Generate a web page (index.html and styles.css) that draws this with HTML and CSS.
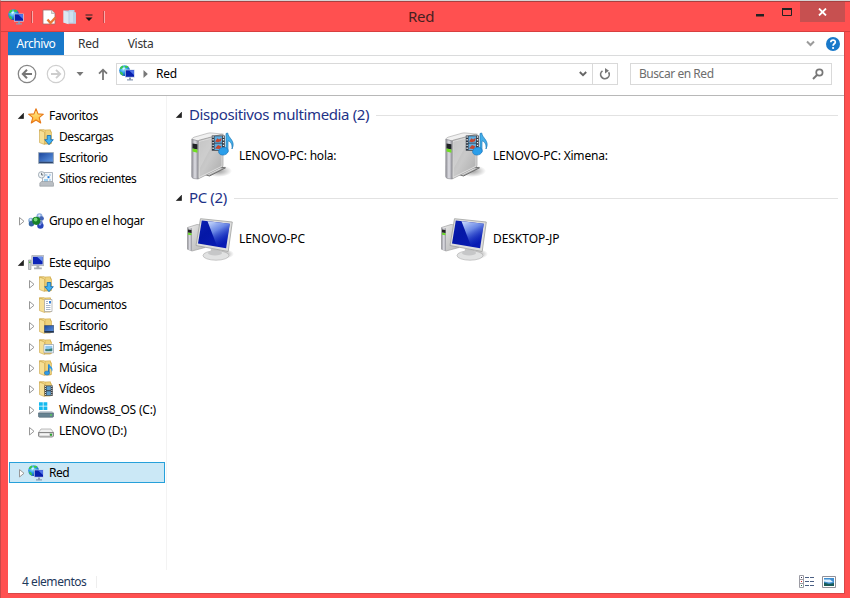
FILE: index.html
```html
<!DOCTYPE html>
<html lang="es">
<head>
<meta charset="utf-8">
<title>Red</title>
<link rel="stylesheet" href="styles.css">
</head>
<body>
<svg class="defs" width="0" height="0" aria-hidden="true">
  <defs>
    <linearGradient id="g-screen" x1="0" y1="0" x2="1" y2="1"><stop offset="0" stop-color="#0d22b4"/><stop offset=".35" stop-color="#0417a6"/><stop offset="1" stop-color="#0a1cb8"/></linearGradient>
    <linearGradient id="g-shine" x1="0" y1="0" x2=".5" y2="1"><stop offset="0" stop-color="#d5e4ff"/><stop offset=".45" stop-color="#7d9cf0" stop-opacity=".85"/><stop offset="1" stop-color="#1433cc" stop-opacity=".1"/></linearGradient>
    <linearGradient id="g-metal" x1="0" y1="0" x2="1" y2="1"><stop offset="0" stop-color="#ececec"/><stop offset=".5" stop-color="#cdcdcd"/><stop offset="1" stop-color="#b9b9b9"/></linearGradient>
    <linearGradient id="g-front" x1="0" y1="0" x2="1" y2="1"><stop offset="0" stop-color="#b4b4b4"/><stop offset=".5" stop-color="#c9c9c9"/><stop offset="1" stop-color="#a9a9a9"/></linearGradient>
    <linearGradient id="g-side" x1="0" y1="0" x2="1" y2="0"><stop offset="0" stop-color="#8d8d94"/><stop offset=".5" stop-color="#dedee4"/><stop offset="1" stop-color="#95959c"/></linearGradient>
    <linearGradient id="g-fold" x1="0" y1="0" x2="1" y2="0"><stop offset="0" stop-color="#e0b84f"/><stop offset=".45" stop-color="#fbe9a6"/><stop offset="1" stop-color="#e9cb70"/></linearGradient>
    <linearGradient id="g-star" x1="0" y1="0" x2="0" y2="1"><stop offset="0" stop-color="#fff59a"/><stop offset="1" stop-color="#ffb02b"/></linearGradient>
    <linearGradient id="g-desk" x1="0" y1="0" x2="1" y2="1"><stop offset="0" stop-color="#1b469c"/><stop offset="1" stop-color="#5d95e2"/></linearGradient>
    <radialGradient id="g-globe" cx=".4" cy=".35" r=".7"><stop offset="0" stop-color="#a8edff"/><stop offset=".5" stop-color="#2a9ae8"/><stop offset="1" stop-color="#0b4aa5"/></radialGradient>
    <radialGradient id="g-shadow"><stop offset="0" stop-color="#000" stop-opacity=".4"/><stop offset="1" stop-color="#000" stop-opacity="0"/></radialGradient>

    <symbol id="net" viewBox="0 0 16 16">
      <circle cx="5.600" cy="5.600" r="5.400" fill="url(#g-globe)"/>
      <path d="M.8 3.500C1.500 2 2.600 1 4 .6l.5 1.200-1.200 1.400L2 4.300zM5.500 1l2.500-.2 1.500 1L8 3 6.300 2.800zM1 6.500l2 .8 1.200 2-.7 1.200C2 9.800 1 8.500 1 6.500z" fill="#3bc94a"/>
      <path d="M3.500 3.200l1.800-.8.8 1.200-1.600 1.200z" fill="#dcfaff"/>
      <path d="M6 4.600h9.700v8H6z" fill="#c5d3e8"/>
      <path d="M6.700 5.300h8.300v6.500H6.700z" fill="#0820ad"/>
      <path d="M10 5.300h5l-.1 4.800z" fill="#4f73e8"/>
      <path d="M10 12.600h2v1.700h2v1.200H8v-1.200h2z" fill="#8b9bb5"/>
    </symbol>
    <symbol id="star" viewBox="0 0 16 16">
      <path d="M8 .8l2 5.100 5.400.3-4.200 3.500 1.500 5.300L8 12l-4.700 3 1.500-5.300L.6 6.200 6 5.900z" fill="url(#g-star)" stroke="#e77817" stroke-width="1.100" stroke-linejoin="round"/>
    </symbol>
    <symbol id="folder" viewBox="0 0 16 16">
      <path d="M1.500.8h5l1 1h5v13.200h-6l-1-1z" fill="url(#g-fold)" stroke="#c69e3c" stroke-width=".7"/>
      <path d="M7 1l5.500-.2v2h1v11.700H7z" fill="#efd27c" stroke="#d0aa4c" stroke-width=".6"/>
      <path d="M1.500 1l5 2v12.500l-5-1.900z" fill="#f6df95" stroke="#c9a244" stroke-width=".6"/>
    </symbol>
    <symbol id="downloads" viewBox="0 0 16 16">
      <use href="#folder"/>
      <path d="M9.200 6.500h3.600v4.200h2.500L11 15.700l-4.300-5h2.500z" fill="#42b1f2" stroke="#0e67ae" stroke-width=".8"/>
    </symbol>
    <symbol id="documents" viewBox="0 0 16 16">
      <use href="#folder"/>
      <path d="M6.500 2.500H14v12H6.500z" fill="#fff" stroke="#a5a5a5" stroke-width=".7"/>
      <path d="M8 4.500h2M8 6.500h2M8 8.500h4.500M8 10.500h4.500M8 12.500h4.500" stroke="#90a4bb" stroke-width=".8"/>
      <path d="M11 4h2v2.500h-2z" fill="#3c83d6"/>
    </symbol>
    <symbol id="deskfolder" viewBox="0 0 16 16">
      <use href="#folder"/>
      <path d="M6.500 7.500h9.300v6.800H6.500z" fill="url(#g-desk)" stroke="#49566b" stroke-width=".7"/>
      <path d="M6.500 13h9.300v1.500H6.500z" fill="#24344e"/>
    </symbol>
    <symbol id="pictures" viewBox="0 0 16 16">
      <use href="#folder"/>
      <path d="M6 5.500h9.500v8.300H6z" fill="#fff" stroke="#8f9caa" stroke-width=".7"/>
      <path d="M7.300 6.800h7v5.500h-7z" fill="#8ec7ee"/><path d="M7.300 10l3 .2 4-1v3.100h-7z" fill="#3d8179"/>
    </symbol>
    <symbol id="music" viewBox="0 0 16 16">
      <use href="#folder"/>
      <path d="M10.800 4.500v8" stroke="#1876c7" stroke-width="1.500"/>
      <path d="M10.500 3.500c.5 2.500 6 3.500 3.200 8.500.2-3-1.200-3.800-3.200-4.200z" fill="#2f9ae5"/>
      <ellipse cx="9" cy="13" rx="2.600" ry="2.100" fill="#2f9ae5" stroke="#1769b0" stroke-width=".5"/>
    </symbol>
    <symbol id="videos" viewBox="0 0 16 16">
      <use href="#folder"/>
      <path d="M6.500 4.500h8.300v10.300H6.500z" fill="#363b40"/>
      <path d="M8.500 5.200h4.300v4H8.500zM8.500 10.200h4.300v4H8.500z" fill="#5e9dca"/>
      <path d="M7.500 5v9.500M13.800 5v9.500" stroke="#e8e8e8" stroke-width=".9" stroke-dasharray="1 1"/>
    </symbol>
    <symbol id="desktop" viewBox="0 0 16 16">
      <path d="M.2 2.200h15.600v11.600H.2z" fill="#8496ad"/>
      <path d="M1.100 3.100h13.800v8.700H1.100z" fill="url(#g-desk)"/>
      <path d="M1.100 11.800h13.800v1.100H1.100z" fill="#253d66"/>
    </symbol>
    <symbol id="recent" viewBox="0 0 16 16">
      <path d="M4.500 1.500h10v11h-10z" fill="#f4f7fa" stroke="#9ba5ae" stroke-width=".8"/>
      <path d="M7 4h2.500M11 4h2M7 9h2M11 9h2" stroke="#8bb9e0"/>
      <path d="M9.500 5.200h2v2h-2z" fill="#1e79d8"/><path d="M6 8h4v3H6z" fill="#9ed0f0"/>
      <path d="M1.800 12l1.500-1.500h11l1.200 1.500v3.200H1.800z" fill="#b9bec3" stroke="#8f959b" stroke-width=".6"/>
      <circle cx="3.600" cy="3.800" r="3.200" fill="#eff3f6" stroke="#93a0aa" stroke-width=".8"/>
      <path d="M3.600 1.800v2.200h1.700" fill="none" stroke="#45515b" stroke-width=".8"/>
    </symbol>
    <symbol id="homegroup" viewBox="0 0 16 16">
      <circle cx="11.500" cy="3.300" r="3" fill="#8faee0"/><circle cx="13.600" cy="5.500" r="2.300" fill="#4263b5"/>
      <circle cx="3" cy="7.500" r="2.700" fill="#7fa8d6"/><circle cx="3.400" cy="10.700" r="2.700" fill="#33639f"/>
      <circle cx="12.400" cy="12.600" r="3.200" fill="#2845ba"/><circle cx="13" cy="9.600" r="1.800" fill="#6580d0"/>
      <circle cx="8.300" cy="7.800" r="4.100" fill="#178029"/><circle cx="7.600" cy="6.500" r="1.900" fill="#75da76"/>
      <circle cx="11.300" cy="2.500" r="1.100" fill="#e6effc"/><circle cx="2.600" cy="6.700" r="1.100" fill="#d6e8f8"/><circle cx="12" cy="11.500" r="1.100" fill="#879cf0"/>
    </symbol>
    <symbol id="computer" viewBox="0 0 16 16">
      <path d="M.5 5h2.500v9.500H.5z" fill="#c9ccd0" stroke="#8b9096" stroke-width=".6"/><path d="M1 6.500h1.500V8H1z" fill="#57b947"/>
      <path d="M3.800.6h12v10h-12z" fill="#d5d9df" stroke="#8b929b" stroke-width=".6"/>
      <path d="M5 1.800h9.600v7.500H5z" fill="#0c24b8"/><path d="M9 1.800h5.600v5z" fill="#6c91ee"/>
      <path d="M8.500 10.600h2.800v2h2.500v1.700H6v-1.700h2.500z" fill="#a8adb4"/>
    </symbol>
    <symbol id="osdrive" viewBox="0 0 16 16">
      <path d="M1 .2h3.800v3.600H1zM5.500.2h3.800v3.600H5.500zM1 4.500h3.800v3.600H1zM5.500 4.500h3.800v3.600H5.500z" fill="#13b9ef"/>
      <path d="M2 9h12l1.700 2H.3z" fill="#c6ced6"/>
      <path d="M.3 11h15.400v3.500l-1 .8H1.300l-1-.8z" fill="#668291" stroke="#536774" stroke-width=".6"/>
      <path d="M12.300 12.200h1.500v1.500h-1.500z" fill="#50e34a"/>
    </symbol>
    <symbol id="drive" viewBox="0 0 16 16">
      <path d="M3 6h10l2.500 3.500H.5z" fill="#f0f0f0" stroke="#a2a2a2" stroke-width=".7"/>
      <path d="M.5 9.500h15v3.500l-1 1h-13l-1-1z" fill="#cfcfcf" stroke="#777" stroke-width=".8"/>
      <path d="M2 10.400h9v2H2z" fill="#f6f6f6"/><path d="M12 10.700h2v2h-2z" fill="#29a32c"/>
    </symbol>

    <symbol id="media-lg" viewBox="0 0 48 48">
      <ellipse cx="32" cy="39" rx="14" ry="6" fill="url(#g-shadow)"/>
      <path d="M17 42l16-7 6.500.8-16 8.200z" fill="#aaa" stroke="#666" stroke-width=".9"/>
      <path d="M20 42l13-5.800 3 .3-13 6.300z" fill="#e2e2e2"/>
      <path d="M5.800 7.500Q6 6 8 5.200L22 1.200Q24 .7 26 1l11.500 1.200L12.500 9z" fill="#f0f0f0" stroke="#a3a3a3" stroke-width=".6"/>
      <path d="M12 9.500Q12 8.500 13 8.200L35.500 2.300Q37 2 37 3.500V33Q37 34.500 36 35L12 47z" fill="url(#g-front)" stroke="#909090" stroke-width=".6"/>
      <path d="M13 9.600L36 3.500v30.700L13 45.500z" fill="none" stroke="#e6e6e6" stroke-width=".8"/>
      <path d="M13.500 10L30 5.500 14 36z" fill="#ddd" opacity=".4"/>
      <path d="M5.800 7.300l6.400 1.700L12 47l-4.500-.5q-1.800-.5-1.800-2z" fill="url(#g-side)" stroke="#88888f" stroke-width=".6"/>
      <path d="M6.500 11.500l4.900.8v5.200l-4.900-1z" fill="#202326"/><path d="M6.500 16.500l4.900 1v3.200l-4.900-1.200z" fill="#70df21"/>
      <path d="M25.800 3.500h13v15.200h-13z" fill="#2d3540"/>
      <path d="M28.500 4.300h7.600v6.400h-7.600zM28.500 11.600h7.600V18h-7.600z" fill="#61acdd"/>
      <path d="M29 9.500l2.500-3.200 1.500 1.200 2.500-1.500-.5 3.200-3 1zM29 16.500l3-3.500 3.500 1.500-2 2.500z" fill="#c4452f"/>
      <path d="M27.100 4.300v14M37.500 4.300v14" stroke="#eef2f6" stroke-width="1.300" stroke-dasharray="1.400 1.400"/>
      <path d="M40 1.500l1.700-.5c.6 5.500 8.300 7.500 4.300 16 .6-5-1.600-7.500-4-8.200l-.1 11.200H40z" fill="#45afe9" stroke="#1d78b9" stroke-width=".7"/>
      <ellipse cx="37.400" cy="19.200" rx="4.900" ry="3.800" transform="rotate(-15 37.400 19.200)" fill="#2a9eea" stroke="#1b74b8" stroke-width=".6"/>
    </symbol>
    <symbol id="pc-lg" viewBox="0 0 48 48">
      <ellipse cx="37" cy="39" rx="11" ry="5" fill="url(#g-shadow)"/>
      <path d="M1.500 12.500L11 9.500l8 1v22L6 36l-4.500-1.800z" fill="url(#g-metal)" stroke="#a2a2a2" stroke-width=".7"/>
      <path d="M1.500 12.500l4.500.8V36l-4.500-1.800z" fill="url(#g-side)"/><path d="M2 14.500l3.500.5v3L2 17.500z" fill="#222"/><path d="M2 17.800l3.500.4v2l-3.500-.4z" fill="#6bd72b"/>
      <path d="M25 34h9l1 6H24z" fill="#c8c8c8"/>
      <ellipse cx="30" cy="40.500" rx="13" ry="4.700" fill="#e1e2e2" stroke="#b5b5b5" stroke-width=".7"/><ellipse cx="29" cy="38" rx="7" ry="2.500" fill="#c6c7c8"/>
      <path d="M14.500 3.700L46.300 7l-4.100 29.500L10 30.500z" fill="#dededd" stroke="#a0a19f" stroke-width=".8"/>
      <path d="M15.800 5.500l28 3.200-3.700 24.600L12 28.500z" fill="url(#g-screen)"/>
      <path d="M21.500 6.200l22.300 2.500-2.700 17.500L31 31z" fill="url(#g-shine)"/>
    </symbol>
    <symbol id="closed" viewBox="0 0 8 10"><path d="M2.500 1.500L7 5.300 2.500 9z" fill="#fff" stroke="#989898"/></symbol>
    <symbol id="open" viewBox="0 0 8 10"><path d="M6.500 2.300v5.200H1.400z" fill="#222" stroke="#222" stroke-width=".7"/></symbol>
  </defs>
</svg>

<div class="window">
  <header class="titlebar">
    <div class="quick">
      <svg class="i16"><use href="#net"/></svg>
      <i class="sep sep-a"></i>
      <svg class="i16 props" viewBox="0 0 16 16"><path d="M2 1h8.500L14 4.500V15H2z" fill="#fff" stroke="#a86a6a" stroke-width=".8"/><path d="M10.500 1v3.500H14" fill="#ddd" stroke="#aaa" stroke-width=".7"/><path d="M6.500 10.500l3 3.500 5-5.500" fill="none" stroke="#e97637" stroke-width="2.400"/></svg>
      <svg class="i16 newf" viewBox="0 0 16 16"><path d="M1.500 1.500h5l1-.5h5v2l1.500.5v11.300H7l-5.500-1z" fill="#b9cfe3"/><path d="M1.500 1.500l5 2v11.700l-5-1.700z" fill="#dce8f2"/><path d="M7.500 2.500h3.500v11H7.500z" fill="#cddfee"/></svg>
      <svg class="more" viewBox="0 0 8 8"><path d="M.5 1h7" stroke="#222"/><path d="M.5 3.500h7L4 7z" fill="#111"/></svg>
      <i class="sep"></i>
    </div>
    <h1>Red</h1>
    <div class="controls">
      <svg class="min" viewBox="0 0 8 3"><path d="M0 0h8v2.500H0z" fill="#222"/></svg>
      <svg class="max" viewBox="0 0 10 8"><path d="M.5 1h9v6.500h-9z" fill="none" stroke="#222"/><path d="M0 0h10v2H0z" fill="#222"/></svg>
      <div class="close"><svg viewBox="0 0 9 8"><path d="M1 .5l7 7M8 .5l-7 7" stroke="#fff" stroke-width="1.800"/></svg></div>
    </div>
  </header>

  <div class="client">
    <nav class="tabs">
      <span class="tab file">Archivo</span><span class="tab red">Red</span><span class="tab">Vista</span>
      <svg class="expand" viewBox="0 0 9 7"><path d="M1 1.500l3.500 3.500L8 1.500" fill="none" stroke="#9b9b9b" stroke-width="2"/></svg>
      <svg class="help" viewBox="0 0 14 14"><circle cx="7" cy="7" r="7" fill="#1979ca"/><path d="M4.800 5.300C4.800 2.300 9.500 2.400 9.300 5.100 9.200 6.800 7.100 6.800 7.100 8.700" fill="none" stroke="#fff" stroke-width="1.700"/><circle cx="7.100" cy="11" r="1.100" fill="#fff"/></svg>
    </nav>

    <div class="navbar">
      <svg class="arrow" viewBox="0 0 20 20"><circle cx="10" cy="10" r="8.700" fill="none" stroke="#858585" stroke-width="1.300"/><path d="M15 10H6M10 5.800L5.800 10l4.200 4.200" fill="none" stroke="#777" stroke-width="2"/></svg>
      <svg class="arrow fwd" viewBox="0 0 20 20"><circle cx="10" cy="10" r="8.700" fill="none" stroke="#cfcfcf" stroke-width="1.200"/><path d="M5 10h9M10 5.800l4.200 4.200-4.200 4.200" fill="none" stroke="#cdcdcd" stroke-width="1.800"/></svg>
      <svg class="hist" viewBox="0 0 8 4"><path d="M.5 0h7L4 4z" fill="#777"/></svg>
      <svg class="up" viewBox="0 0 10 12"><path d="M5 12V2M1 5.700L5 1.700l4 4" fill="none" stroke="#777" stroke-width="1.800"/></svg>
      <div class="address">
        <svg class="i16"><use href="#net"/></svg>
        <svg class="crumb" viewBox="0 0 5 8"><path d="M.5 0v8L4.800 4z" fill="#777"/></svg>
        <span>Red</span>
        <svg class="drop" viewBox="0 0 8 6"><path d="M.8 1L4 4.200 7.200 1" fill="none" stroke="#666" stroke-width="1.900"/></svg>
        <div class="refresh"><svg viewBox="0 0 12 12"><path d="M3.500 2.900A4.300 4.300 0 1 0 9.600 4.200" fill="none" stroke="#777" stroke-width="1.700"/><path d="M6 0v5.500l4-2.800z" fill="#777"/></svg></div>
      </div>
      <div class="search"><span>Buscar en Red</span><svg viewBox="0 0 12 12"><circle cx="7.400" cy="4.500" r="3.200" fill="none" stroke="#777" stroke-width="1.700"/><path d="M5 7L1 11" stroke="#777" stroke-width="2"/></svg></div>
    </div>

    <div class="body">
      <aside class="tree">
        <div class="row"><svg class="tw"><use href="#open"/></svg><svg class="i16"><use href="#star"/></svg><span>Favoritos</span></div>
        <div class="row sub"><svg class="tw"></svg><svg class="i16"><use href="#downloads"/></svg><span class="tight">Descargas</span></div>
        <div class="row sub"><svg class="tw"></svg><svg class="i16"><use href="#desktop"/></svg><span class="tight">Escritorio</span></div>
        <div class="row sub"><svg class="tw"></svg><svg class="i16"><use href="#recent"/></svg><span class="tight">Sitios recientes</span></div>
        <div class="row section"><svg class="tw"><use href="#closed"/></svg><svg class="i16"><use href="#homegroup"/></svg><span class="tight">Grupo en el hogar</span></div>
        <div class="row section"><svg class="tw"><use href="#open"/></svg><svg class="i16"><use href="#computer"/></svg><span class="tight">Este equipo</span></div>
        <div class="row sub"><svg class="tw"><use href="#closed"/></svg><svg class="i16"><use href="#downloads"/></svg><span class="tight">Descargas</span></div>
        <div class="row sub"><svg class="tw"><use href="#closed"/></svg><svg class="i16"><use href="#documents"/></svg><span class="tight">Documentos</span></div>
        <div class="row sub"><svg class="tw"><use href="#closed"/></svg><svg class="i16"><use href="#deskfolder"/></svg><span class="tight">Escritorio</span></div>
        <div class="row sub"><svg class="tw"><use href="#closed"/></svg><svg class="i16"><use href="#pictures"/></svg><span class="tight">Imágenes</span></div>
        <div class="row sub"><svg class="tw"><use href="#closed"/></svg><svg class="i16"><use href="#music"/></svg><span>Música</span></div>
        <div class="row sub"><svg class="tw"><use href="#closed"/></svg><svg class="i16"><use href="#videos"/></svg><span>Vídeos</span></div>
        <div class="row sub"><svg class="tw"><use href="#closed"/></svg><svg class="i16"><use href="#osdrive"/></svg><span class="caps">Windows8_OS (C:)</span></div>
        <div class="row sub"><svg class="tw"><use href="#closed"/></svg><svg class="i16"><use href="#drive"/></svg><span class="caps">LENOVO (D:)</span></div>
        <div class="row section selected"><svg class="tw"><use href="#closed"/></svg><svg class="i16"><use href="#net"/></svg><span class="tight">Red</span></div>
      </aside>

      <main class="content">
        <section>
          <h2><svg class="tw"><use href="#open"/></svg><span>Dispositivos multimedia (2)</span></h2>
          <div class="items">
            <div class="item"><svg><use href="#media-lg"/></svg><span>LENOVO-PC: hola:</span></div>
            <div class="item"><svg><use href="#media-lg"/></svg><span>LENOVO-PC: Ximena:</span></div>
          </div>
        </section>
        <section>
          <h2><svg class="tw"><use href="#open"/></svg><span>PC (2)</span></h2>
          <div class="items">
            <div class="item short"><svg><use href="#pc-lg"/></svg><span>LENOVO-PC</span></div>
            <div class="item short"><svg><use href="#pc-lg"/></svg><span>DESKTOP-JP</span></div>
          </div>
        </section>
      </main>
    </div>

    <footer class="status">
      <span>4 elementos</span>
      <svg class="details" viewBox="0 0 16 13"><path d="M.5.500h4v12h-4zM.5 4.500h4M.5 8.500h4" fill="#fff" stroke="#9c9ca4"/><path d="M2 2h1v1H2z" fill="#335"/><path d="M2 6h1v1H2z" fill="#c22"/><path d="M2 10h1v1H2z" fill="#274"/><path d="M6 2.500h4M11 2.500h4M6 6.500h4M11 6.500h4M6 10.500h4M11 10.500h4" stroke="#4b6084"/></svg>
      <svg class="thumbs" viewBox="0 0 14 12"><path d="M.5.500h13v11H.5z" fill="#fff" stroke="#8f8f98"/><path d="M2 2h10v8H2z" fill="#3e8ed0"/><path d="M2 3.500h6l3 2.500-4 .5-5-1z" fill="#dcefff"/><path d="M2 6.500l5 1.500 5-1v3H2z" fill="#195c58"/></svg>
    </footer>
  </div>
</div>
</body>
</html>
```

FILE: styles.css
```css
* { box-sizing: border-box; }
body {
  margin: 0;
  font: 12px/21px "Noto Sans", "Open Sans", sans-serif;
  letter-spacing: -0.3px;
  color: #000;
}
svg { display: block; flex: none; }
.defs { position: absolute; }
.i16 { width: 16px; height: 16px; }
.tw { width: 8px; height: 10px; }

.window {
  width: 850px;
  height: 598px;
  background: #ff5050;
  border-top: 1px solid #d4d4d4;
  border-left: 1px solid #c94848;
  padding: 0 5px 4px 7px;
  overflow: hidden;
}
.titlebar {
  height: 31px;
  margin: 0 -5px 0 -7px;
  padding-left: 7px;
  border-top: 1px solid #a84040;
  border-bottom: 1px solid #d83f3f;
  display: grid;
  grid-template-columns: 400px auto 1fr;
  align-items: start;
}
.quick { display: flex; align-items: center; height: 29px; }
.sep { width: 2px; height: 12px; background: #c94343; border-right: 1px solid #f8aaaa; }
.sep-a { margin-left: 7px; }
.props { margin-left: 8px; }
.newf { margin-left: 5px; }
.more { width: 8px; height: 8px; margin: 3px 10px 0 7px; }
h1 { margin: 0; font-size: 15px; line-height: 28px; font-weight: 400; letter-spacing: -0.3px; color: #472020; }
.controls { display: flex; justify-content: flex-end; padding-right: 5px; }
.min { width: 8px; height: 3px; margin: 12px 18px 0 0; }
.max { width: 10px; height: 8px; margin: 6px 8px 0 0; }
.close { width: 45px; height: 20px; background: #c75050; display: flex; align-items: center; justify-content: center; }
.close svg { width: 9px; height: 8px; }

.client { height: 562px; background: #fff; border-right: 1px solid #d84848; border-bottom: 1px solid #d84848; display: flex; flex-direction: column; }
.tabs { height: 24px; border-bottom: 1px solid #dadbdc; display: flex; align-items: center; line-height: 25px; color: #333; flex: none; }
.tab.file { width: 56px; height: 23px; background: #1979ca; color: #fff; text-align: center; letter-spacing: -0.45px; line-height: 24px; }
.tab.red { margin: 0 29px 0 14px; }
.expand { width: 9px; height: 7px; margin-left: auto; }
.help { width: 14px; height: 14px; margin: 0 4px 0 11px; }

.navbar { height: 40px; border-bottom: 1px solid #b8b8b8; display: flex; align-items: center; padding: 0 12px 4px 9px; flex: none; }
.arrow { width: 20px; height: 20px; }
.fwd { margin-left: 9px; }
.hist { width: 8px; height: 4px; margin-left: 10px; }
.up { width: 10px; height: 12px; margin-left: 14px; }
.address { width: 502px; height: 22px; margin-left: 8px; border: 1px solid #d9d9d9; display: flex; align-items: center; line-height: 20px; }
.address .i16 { margin: 0 0 2px 2px; }
.crumb { width: 5px; height: 8px; margin: 0 8px 0 8px; }
.drop { width: 8px; height: 6px; margin: 0 5px 0 auto; }
.refresh { width: 25px; height: 20px; border-left: 1px solid #d9d9d9; display: flex; align-items: center; justify-content: center; }
.refresh svg { width: 12px; height: 12px; }
.search { width: 202px; height: 22px; margin-left: auto; border: 1px solid #d9d9d9; display: flex; align-items: center; justify-content: space-between; padding: 0 7px 0 8px; color: #6d6d6d; letter-spacing: -0.45px; line-height: 20px; }
.search svg { width: 12px; height: 12px; }

.body { flex: 1; display: flex; min-height: 0; }
.tree { width: 159px; padding: 9px 1px 0; border-right: 1px solid #f3f3f3; }
.row { display: flex; align-items: center; height: 21px; padding-left: 8px; white-space: nowrap; }
.row .i16 { margin: 0 5px 0 3px; }
.row.sub { padding-left: 18px; }
.row.section { margin-top: 21px; }
.row.selected { background: #cbe8f6; border: 1px solid #26a0da; padding-left: 7px; }
.tight { letter-spacing: -0.45px; }
.caps { letter-spacing: -0.22px; }

.content { flex: 1; padding: 8px 6px 0 8px; }
section { margin-bottom: 7px; }
h2 { margin: 0; height: 22px; display: flex; align-items: center; font-size: 15px; font-weight: 400; letter-spacing: -0.38px; color: #1e3287; line-height: 20px; }
h2 span { margin: -2px 0 0 6px; }
h2::after { content: ""; flex: 1; height: 1px; margin-left: 7px; background: #e2e2e2; }
.items { display: flex; margin: 6px 0 0 11px; }
.item { width: 254px; display: flex; align-items: center; white-space: nowrap; letter-spacing: -0.2px; }
.item.short { letter-spacing: -0.05px; }
.item span { margin-top: -2px; }
.item svg { width: 48px; height: 48px; margin-right: 5px; }

.status { height: 23px; flex: none; display: flex; align-items: center; padding: 0 8px 0 14px; color: #1e395b; }
.status span { padding-right: 10px; border-right: 1px solid #eee; line-height: 12px; letter-spacing: -0.45px; }
.details { width: 16px; height: 13px; margin-left: auto; }
.thumbs { width: 14px; height: 12px; margin-left: 7px; }
```
